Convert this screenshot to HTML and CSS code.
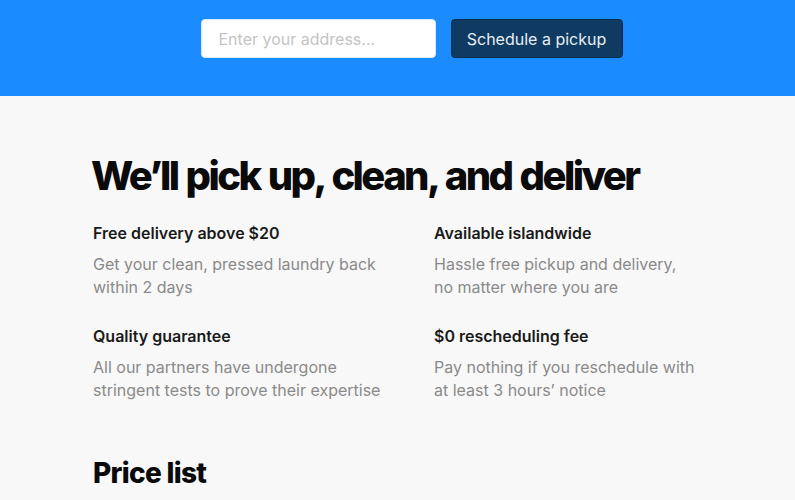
FILE: index.html
```html
<!DOCTYPE html>
<html lang="en">
<head>
  <meta charset="UTF-8">
  <title>Laundry pickup</title>
  <link rel="stylesheet" href="styles.css">
</head>
<body>
<div class="hero">
  <form class="pickup-form">
    <input class="address" type="text" placeholder="Enter your address...">
    <button class="pickup-btn" type="button">Schedule a pickup</button>
  </form>
</div>

<div class="content">
  <h1 class="title">We’ll pick up, clean, and deliver</h1>
  <ul class="features">
    <li>
      <h3>Free delivery above $20</h3>
      <p>Get your clean, pressed laundry back within 2 days</p>
    </li>
    <li>
      <h3>Available islandwide</h3>
      <p>Hassle free pickup and delivery, no matter where you are</p>
    </li>
    <li>
      <h3>Quality guarantee</h3>
      <p>All our partners have undergone stringent tests to prove their expertise</p>
    </li>
    <li>
      <h3>$0 rescheduling fee</h3>
      <p>Pay nothing if you reschedule with at least 3 hours’ notice</p>
    </li>
  </ul>
  <h2 class="subtitle">Price list</h2>
</div>
</body>
</html>
```

FILE: styles.css
```css
* {
  padding: 0;
  margin: 0;
  list-style: none;
  box-sizing: border-box;
}

body {
  background-color: #f8f8f8;
  font-family: Inter, "Liberation Sans", sans-serif;
  color: #111;
}

.hero {
  background-color: #1a8cff;
  padding: 19px 0 38px;
}

.pickup-form {
  display: flex;
  justify-content: center;
  gap: 15px;
  padding-left: 28px;
}

.address {
  width: 235px;
  height: 39px;
  padding: 0 17px;
  border: 1px solid #d6e8ff;
  border-radius: 4px;
  background-color: #fff;
  font: 400 16px Inter, "Liberation Sans", sans-serif;
  color: #333;
  outline: none;
}

.address::placeholder {
  color: #c4c4c4;
}

.pickup-btn {
  width: 172px;
  height: 39px;
  border: 1px solid #0a2c4d;
  border-radius: 4px;
  background-color: #0f3a61;
  color: #e8eef5;
  font: 400 16px Inter, "Liberation Sans", sans-serif;
  cursor: pointer;
}

.content {
  padding: 56px 0 0 93px;
}

.title {
  font-size: 40px;
  line-height: 48px;
  font-weight: 800;
  letter-spacing: -2.6px;
  word-spacing: 2px;
  margin-left: -2px;
  color: #0a0a0a;
}

.features {
  display: grid;
  grid-template-columns: 341px 262px;
  row-gap: 25px;
  margin-top: 21px;
}

.features h3 {
  font-size: 16px;
  line-height: 24px;
  font-weight: 600;
  color: #1a1a1a;
}

.features p {
  margin-top: 8px;
  font-size: 16px;
  line-height: 23px;
  color: #8a8a8a;
  max-width: 300px;
}

.subtitle {
  margin-top: 54px;
  font-size: 28px;
  line-height: 34px;
  font-weight: 800;
  letter-spacing: -0.7px;
  color: #0a0a0a;
}
```
